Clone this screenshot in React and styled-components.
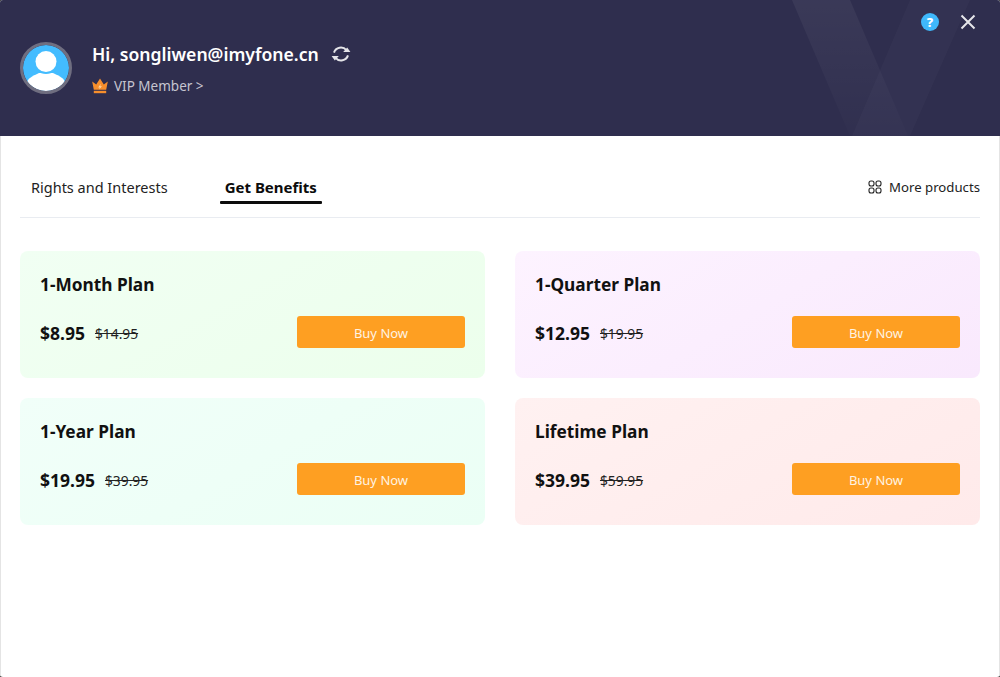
import React from 'react'
import styled, { createGlobalStyle } from 'styled-components'

const Global = createGlobalStyle`
  html, body { margin: 0; padding: 0; background: #3a3a3a; }
  #root { width: 1000px; height: 677px; }
  * { box-sizing: border-box; }
`

const plans = [
  { name: '1-Month Plan', price: '$8.95', old: '$14.95', tint: 'linear-gradient(150deg, #f1fff3, #ecffec)' },
  { name: '1-Quarter Plan', price: '$12.95', old: '$19.95', tint: 'linear-gradient(150deg, #fdf3ff, #f9e9fd)' },
  { name: '1-Year Plan', price: '$19.95', old: '$39.95', tint: 'linear-gradient(150deg, #f1fff9, #ebfff5)' },
  { name: 'Lifetime Plan', price: '$39.95', old: '$59.95', tint: 'linear-gradient(150deg, #fff1f1, #ffeaea)' },
]

function App() {
  return (
    <Win>
      <Global />
      <Header>
        <Beam viewBox="0 0 240 136" aria-hidden="true">
          <defs>
            <linearGradient id="fadeA" x1="0" y1="0" x2="0" y2="1">
              <stop offset="0" stopColor="#fff" stopOpacity="0.055" />
              <stop offset="1" stopColor="#fff" stopOpacity="0.008" />
            </linearGradient>
          </defs>
          <polygon points="32,0 90,0 148,136 90,136" fill="url(#fadeA)" />
          <polygon points="150,0 210,0 150,136 92,136" fill="#fff" fillOpacity="0.022" />
        </Beam>
        <Avatar>
          <svg width="52" height="52" viewBox="0 0 52 52">
            <defs>
              <clipPath id="av"><circle cx="26" cy="26" r="23" /></clipPath>
            </defs>
            <circle cx="26" cy="26" r="23" fill="#43bcff" />
            <g clipPath="url(#av)">
              <path d="M7 50 V41 C7 37 12 34 19 31 H33 C40 34 45 37 45 41 V50 Z" fill="#fff" />
              <circle cx="26" cy="20" r="12" fill="#43bcff" />
              <circle cx="26" cy="19.6" r="10.5" fill="#fff" />
            </g>
            <circle cx="26" cy="26" r="24.5" fill="none" stroke="#6f6e80" strokeWidth="3" />
          </svg>
        </Avatar>
        <UserInfo>
          <NameRow>
            <UserName>Hi, songliwen@imyfone.cn</UserName>
            <svg width="20" height="20" viewBox="0 0 20 20" fill="none" stroke="#e4e4e8" strokeWidth="2">
              <path d="M3 8.6 A7.2 7.2 0 0 1 15.4 6.2" />
              <path d="M17 11.4 A7.2 7.2 0 0 1 4.6 13.8" />
              <path d="M12.2 8 H19.4 L16.2 3.4 Z" fill="#e4e4e8" stroke="none" />
              <path d="M7.8 12 H0.6 L3.8 16.6 Z" fill="#e4e4e8" stroke="none" />
            </svg>
          </NameRow>
          <VipRow>
            <svg width="16" height="16" viewBox="0 0 16 16">
              <path d="M0.2 3.6 L4.2 6.6 L8 0.6 L11.8 6.6 L15.8 3.6 L14.2 11.8 H1.8 Z" fill="#f78e2c" />
              <rect x="1.8" y="12.8" width="12.4" height="2.4" fill="#f78e2c" />
              <path d="M8.8 5.8 L6.2 9.4 H7.8 L7 11.4 L10 8.2 H8.2 Z" fill="#ffd9a8" />
            </svg>
            <span>VIP Member &gt;</span>
          </VipRow>
        </UserInfo>
        <HeaderActions>
          <Help>?</Help>
          <svg width="16" height="16" viewBox="0 0 16 16" stroke="#e6e6ea" strokeWidth="2">
            <path d="M1.5 1.5 L14.5 14.5 M14.5 1.5 L1.5 14.5" />
          </svg>
        </HeaderActions>
      </Header>
      <Body>
        <Tabs>
          <Tab>Rights and Interests</Tab>
          <Tab $active>Get Benefits</Tab>
          <More>
            <svg width="14" height="14" viewBox="0 0 14 14" fill="none" stroke="#222" strokeWidth="1.1">
              <rect x="1" y="1" width="5" height="5" rx="2" />
              <rect x="8" y="1" width="5" height="5" rx="2" />
              <rect x="1" y="8" width="5" height="5" rx="2" />
              <rect x="8" y="8" width="5" height="5" rx="2" />
            </svg>
            More products
          </More>
        </Tabs>
        <Grid>
          {plans.map((p) => (
            <Card key={p.name} $tint={p.tint}>
              <PlanName>{p.name}</PlanName>
              <PriceRow>
                <Price>{p.price}</Price>
                <OldPrice>{p.old}</OldPrice>
                <BuyBtn>Buy Now</BuyBtn>
              </PriceRow>
            </Card>
          ))}
        </Grid>
      </Body>
    </Win>
  )
}

export default App

const Win = styled.div`
  width: 1000px;
  height: 677px;
  display: flex;
  flex-direction: column;
  background: #fff;
  border-radius: 3px;
  overflow: hidden;
  font-family: 'Noto Sans', 'Open Sans', sans-serif;
  color: #111;
`

const Header = styled.header`
  position: relative;
  height: 136px;
  flex: none;
  background: #2f2e4e;
  display: flex;
  align-items: center;
  padding: 0 20px;
  overflow: hidden;
`

const Beam = styled.svg`
  position: absolute;
  right: 0;
  top: 0;
  width: 240px;
  height: 136px;
`

const Avatar = styled.div`
  width: 52px;
  height: 52px;
  display: flex;
  margin-right: 20px;
`

const UserInfo = styled.div`
  display: flex;
  flex-direction: column;
  gap: 10px;
  margin-top: 2px;
`

const NameRow = styled.div`
  display: flex;
  align-items: center;
  gap: 12px;
  height: 24px;
`

const UserName = styled.span`
  color: #fff;
  font-size: 17.6px;
  font-weight: 600;
`

const VipRow = styled.div`
  display: flex;
  align-items: center;
  gap: 6px;
  color: #c6c5d0;
  font-size: 13.5px;
  height: 20px;
`

const HeaderActions = styled.div`
  position: absolute;
  top: 13px;
  right: 24px;
  display: flex;
  align-items: center;
  gap: 21px;
`

const Help = styled.div`
  width: 18px;
  height: 18px;
  border-radius: 50%;
  background: #3fb8fb;
  color: #fff;
  font-size: 13px;
  font-weight: 800;
  line-height: 18px;
  text-align: center;
`

const Body = styled.main`
  flex: 1;
  padding: 0 19px;
  border-left: 1px solid #e4e4e4;
  border-right: 1px solid #e4e4e4;
`

const Tabs = styled.nav`
  height: 82px;
  display: flex;
  align-items: flex-end;
  border-bottom: 1px solid #e9ecf1;
`

const Tab = styled.div`
  position: relative;
  height: 42px;
  font-size: ${(p) => (p.$active ? '15px' : '14.5px')};
  font-weight: ${(p) => (p.$active ? 700 : 400)};
  padding: ${(p) => (p.$active ? '0 5px' : '0 11px')};
  min-width: ${(p) => (p.$active ? '102px' : '0')};
  margin-right: 41px;
  line-height: 24px;
  color: ${(p) => (p.$active ? '#0c0c0c' : '#222')};

  &::after {
    content: '';
    display: ${(p) => (p.$active ? 'block' : 'none')};
    position: absolute;
    left: 0;
    right: 0;
    bottom: 13px;
    height: 3px;
    border-radius: 1px;
    background: #0c0c0c;
  }
`

const More = styled.div`
  margin-left: auto;
  height: 42px;
  display: flex;
  align-items: flex-start;
  gap: 7px;
  font-size: 13.2px;
  line-height: 24px;
  color: #222;

  svg {
    margin-top: 5px;
  }
`

const Grid = styled.section`
  display: grid;
  grid-template-columns: 465px 465px;
  column-gap: 30px;
  row-gap: 20px;
  margin-top: 33px;
`

const Card = styled.article`
  height: 127px;
  border-radius: 8px;
  background: ${(p) => p.$tint};
  padding: 21px 20px 0;
`

const PlanName = styled.h3`
  margin: 0;
  font-size: 17.3px;
  font-weight: 700;
  line-height: 26px;
  color: #111;
`

const PriceRow = styled.div`
  display: flex;
  align-items: center;
  margin-top: 18px;
`

const Price = styled.span`
  position: relative;
  top: 1px;
  font-size: 17.5px;
  font-weight: 700;
`

const OldPrice = styled.span`
  position: relative;
  top: 1px;
  margin-left: 10px;
  font-size: 13.8px;
  color: #222;
  text-decoration: line-through;
`

const BuyBtn = styled.button`
  margin-left: auto;
  width: 168px;
  height: 32px;
  padding: 2px 0 0;
  border: none;
  border-radius: 3px;
  background: #fe9f22;
  color: #fff3e2;
  font: 400 13px 'Noto Sans', 'Open Sans', sans-serif;
`
